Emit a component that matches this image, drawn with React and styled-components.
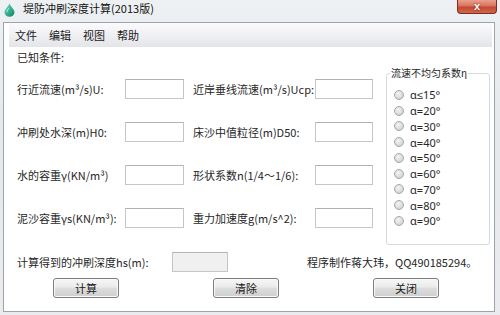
import React from "react";
import styled, { createGlobalStyle } from "styled-components";

const GlobalStyle = createGlobalStyle`
    html, body {
        margin: 0;
        padding: 0;
        background: #ffffff;
    }
    body {
        font-family: "Noto Sans CJK SC", "Noto Sans", "Liberation Sans", sans-serif;
        font-size: 11px;
        color: #262626;
    }
`;

const menus = ["文件", "编辑", "视图", "帮助"];

const rows = [
    ["行近流速(m³/s)U:", "近岸垂线流速(m³/s)Ucp:"],
    ["冲刷处水深(m)H0:", "床沙中值粒径(m)D50:"],
    ["水的容重γ(KN/m³)", "形状系数n(1/4～1/6):"],
    ["泥沙容重γs(KN/m³):", "重力加速度g(m/s^2):"],
];

const angles = ["α≤15°", "α=20°", "α=30°", "α=40°", "α=50°", "α=60°", "α=70°", "α=80°", "α=90°"];

const buttons = ["计算", "清除", "关闭"];

const AppIcon = () => (
    <IconBox>
        <svg width="11" height="14" viewBox="0 0 11 14">
            <defs>
                <linearGradient id="drop" x1="0" y1="0" x2="1" y2="1">
                    <stop offset="0" stopColor="#6fe0c4" />
                    <stop offset="1" stopColor="#0b7f62" />
                </linearGradient>
            </defs>
            <path d="M5.5 0.5 C7 4, 10.5 6.5, 10.5 9.2 A5 4.6 0 0 1 0.5 9.2 C0.5 6.5 4 4 5.5 0.5Z" fill="url(#drop)" />
            <path d="M3 9 C3 7.5 4.2 6 5 5" stroke="#d8fff3" strokeWidth="1" fill="none" opacity="0.8" />
        </svg>
    </IconBox>
);

const App = () => {
    return (
        <>
        <GlobalStyle />
        <Window>
            <TitleBar>
                <AppIcon />
                <Title>堤防冲刷深度计算(2013版)</Title>
                <CloseButton>x</CloseButton>
            </TitleBar>
            <Client>
                <MenuBar>
                    {menus.map((m) => (
                        <MenuItem key={m}>{m}</MenuItem>
                    ))}
                </MenuBar>
                <Body>
                    <SectionTitle>已知条件:</SectionTitle>
                    <Main>
                        <FieldGrid>
                            {rows.map(([a, b]) => (
                                <React.Fragment key={a}>
                                    <Label>{a}</Label>
                                    <TextBox />
                                    <Label $second>{b}</Label>
                                    <TextBox />
                                </React.Fragment>
                            ))}
                        </FieldGrid>
                        <GroupBox>
                            <Caption>流速不均匀系数η</Caption>
                            {angles.map((a) => (
                                <RadioRow key={a}>
                                    <RadioDot />
                                    <span>{a}</span>
                                </RadioRow>
                            ))}
                        </GroupBox>
                    </Main>
                    <ResultRow>
                        <ResultLabel>计算得到的冲刷深度hs(m):</ResultLabel>
                        <TextBox $readOnly />
                        <Credit>程序制作蒋大玮，QQ490185294。</Credit>
                    </ResultRow>
                    <ButtonRow>
                        {buttons.map((b) => (
                            <PushButton key={b}>{b}</PushButton>
                        ))}
                    </ButtonRow>
                </Body>
            </Client>
        </Window>
        </>
    );
};

export default App;

const Window = styled.div`
    width: 500px;
    height: 315px;
    box-sizing: border-box;
    padding: 0 5px 3px 3px;
    display: flex;
    flex-direction: column;
    background: linear-gradient(180deg, #eef1f4 0%, #e6e9ec 40%, #e9ebee 100%);
    overflow: hidden;
`;

const TitleBar = styled.div`
    height: 22px;
    display: flex;
    align-items: flex-start;
    flex-shrink: 0;
`;

const IconBox = styled.div`
    width: 11px;
    height: 14px;
    margin: 3px 0 0 1px;
`;

const Title = styled.div`
    margin-left: 8px;
    line-height: 17px;
    font-size: 11px;
    color: #111;
`;

const CloseButton = styled.div`
    margin-left: auto;
    margin-right: -2px;
    width: 40px;
    height: 14px;
    box-sizing: border-box;
    border: 1px solid #7a2e22;
    border-top: none;
    border-radius: 0 0 4px 4px;
    background: linear-gradient(180deg, #e9a08f 0%, #d9735c 45%, #c24a30 55%, #d0664c 100%);
    color: #ffffff;
    font-family: "Liberation Sans", sans-serif;
    font-weight: bold;
    font-size: 11px;
    line-height: 12px;
    text-align: center;
    text-shadow: 0 0 2px #5a1a10;
`;

const Client = styled.div`
    flex: 1;
    display: flex;
    flex-direction: column;
    background: #ffffff;
    border: 1px solid #9da3aa;
`;

const MenuBar = styled.div`
    height: 24px;
    margin: 0 2px 0 5px;
    display: flex;
    align-items: center;
    background: linear-gradient(180deg, #fbfbfc 0%, #f0f1f3 45%, #e3e5e8 100%);
`;

const MenuItem = styled.div`
    padding: 0 6px;
    font-size: 11px;
    line-height: 24px;
    color: #1a1a1a;
`;

const Body = styled.div`
    display: flex;
    flex-direction: column;
    padding: 2px 4px 0 13px;
`;

const SectionTitle = styled.div`
    line-height: 16px;
`;

const Main = styled.div`
    margin-top: 2px;
    display: flex;
    align-items: flex-start;
`;

const FieldGrid = styled.div`
    padding-top: 12px;
    display: grid;
    grid-template-columns: 108px 59px 131px 58px;
    grid-auto-rows: 20px;
    row-gap: 23px;
`;

const Label = styled.div`
    line-height: 20px;
    white-space: nowrap;
    padding-left: ${(p) => (p.$second ? "9px" : "0")};
`;

const TextBox = styled.div`
    box-sizing: border-box;
    height: 20px;
    width: ${(p) => (p.$readOnly ? "56px" : "auto")};
    border: 1px solid #c3c7cc;
    border-top-color: #b0b4ba;
    background: ${(p) => (p.$readOnly ? "#f0f0f0" : "#ffffff")};
`;

const GroupBox = styled.div`
    position: relative;
    margin: 6px 0 0 13px;
    width: 104px;
    height: 172px;
    box-sizing: border-box;
    border: 1px solid #d3dae0;
    border-radius: 3px;
    padding: 13px 0 0 7px;
`;

const Caption = styled.div`
    position: absolute;
    top: -9px;
    left: 3px;
    padding: 0 1px;
    background: #ffffff;
    font-size: 10px;
    line-height: 16px;
    white-space: nowrap;
`;

const RadioRow = styled.div`
    height: 15.75px;
    display: flex;
    align-items: center;
    line-height: 15px;
    white-space: nowrap;
    font-family: "Noto Sans", "Liberation Sans", sans-serif;
`;

const RadioDot = styled.span`
    width: 10px;
    height: 10px;
    box-sizing: border-box;
    margin-right: 6px;
    border-radius: 50%;
    border: 1px solid #a4a7aa;
    background: radial-gradient(circle at 40% 35%, #f4f4f4 0%, #dcdcdc 55%, #c6c6c6 100%);
`;

const ResultRow = styled.div`
    margin-top: 7px;
    height: 20px;
    display: flex;
    align-items: center;
`;

const ResultLabel = styled.div`
    width: 155px;
    white-space: nowrap;
`;

const Credit = styled.div`
    margin-left: 79px;
    white-space: nowrap;
`;

const ButtonRow = styled.div`
    margin-top: 6px;
    padding-left: 36px;
    display: flex;
    gap: 94px;
`;

const PushButton = styled.div`
    width: 66px;
    height: 20px;
    box-sizing: border-box;
    border: 1px solid #7d7d7d;
    border-radius: 3px;
    background: linear-gradient(180deg, #f6f6f6 0%, #ebebeb 45%, #dddddd 50%, #cfcfcf 100%);
    box-shadow: inset 0 0 0 1px #fbfbfb;
    text-align: center;
    line-height: 18px;
    color: #1a1a1a;
`;
